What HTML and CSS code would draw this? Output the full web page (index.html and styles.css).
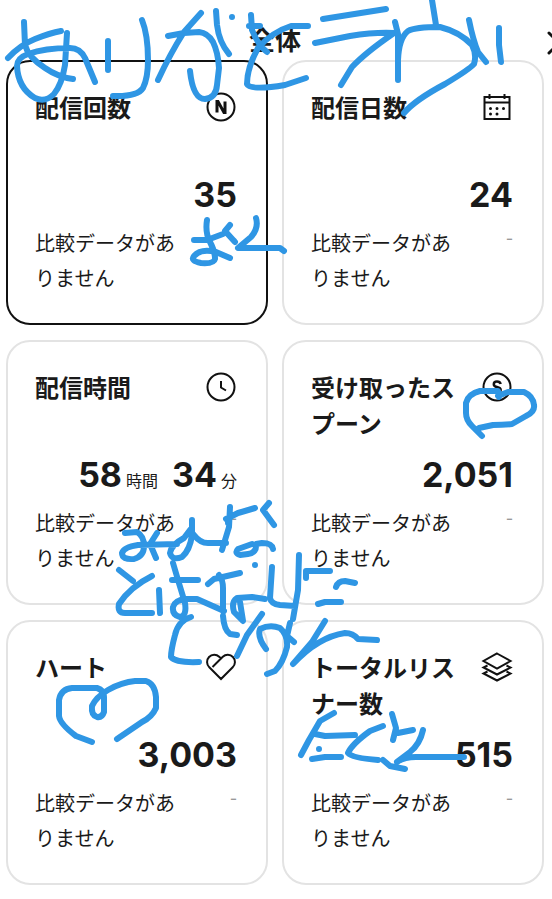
FILE: index.html
```html
<!DOCTYPE html>
<html lang="ja">
<head>
  <meta charset="UTF-8" />
  <meta name="viewport" content="width=device-width, initial-scale=1.0" />
  <title>全体</title>
  <link rel="stylesheet" href="styles.css">
</head>
<body>
<div class="page">
  <header class="topbar">
    <h1>全体</h1>
    <button type="button" class="close" aria-label="閉じる">
      <svg viewBox="0 0 24 24"><path d="M2 2 22 22M22 2 2 22"/></svg>
    </button>
  </header>

  <main class="grid">
    <section class="card active">
      <div class="head">
        <h2>配信回数</h2>
        <svg class="icon" viewBox="0 0 32 32"><circle cx="16" cy="16" r="13.5"/><path class="bold" d="M12 21.500V10.500H13L19 21.500H20V10.500"/></svg>
      </div>
      <p class="value">35</p>
      <div class="note"><p>比較データがありません</p><span>-</span></div>
    </section>

    <section class="card">
      <div class="head">
        <h2>配信日数</h2>
        <svg class="icon" viewBox="0 0 32 32"><path d="M3.5 6H28.500V28H3.500ZM3.500 11.500H28.500M8.500 3V8M23.500 3V8"/><path class="dots" d="M9.500 17.500h0M16 17.500h0M22.500 17.500h0M9.500 23h0M16 23h0"/></svg>
      </div>
      <p class="value">24</p>
      <div class="note"><p>比較データがありません</p><span>-</span></div>
    </section>

    <section class="card">
      <div class="head">
        <h2>配信時間</h2>
        <svg class="icon" viewBox="0 0 32 32"><circle cx="16" cy="16" r="13.5"/><path d="M16 10V16.500L21 19.500"/></svg>
      </div>
      <p class="value">58<small>時間</small><b>34</b><small>分</small></p>
      <div class="note"><p>比較データがありません</p><span>-</span></div>
    </section>

    <section class="card">
      <div class="head">
        <h2>受け取ったスプーン</h2>
        <svg class="icon" viewBox="0 0 32 32"><circle cx="16" cy="16" r="13.5"/><path class="mid" d="M19.700 13Q19 10.500 16 10.500Q12.800 10.500 12.800 13.200Q12.800 15.300 16 16Q19.700 16.800 19.700 19Q19.500 21.800 16 21.800Q12.800 21.800 12.300 19"/></svg>
      </div>
      <p class="value">2,051</p>
      <div class="note"><p>比較データがありません</p><span>-</span></div>
    </section>

    <section class="card">
      <div class="head">
        <h2>ハート</h2>
        <svg class="icon" viewBox="0 0 32 32"><path d="M16 28 4.300 16.200A7 7 0 0 1 14.200 5.800L16 7.500 17.800 5.800A7 7 0 0 1 27.700 16.200ZM16 7.500 7.500 16"/></svg>
      </div>
      <p class="value">3,003</p>
      <div class="note"><p>比較データがありません</p><span>-</span></div>
    </section>

    <section class="card">
      <div class="head">
        <h2>トータルリスナー数</h2>
        <svg class="icon" viewBox="0 0 32 32"><path d="M16 2.500 29.500 10 16 17.500 2.500 10ZM6.500 14.500 2.500 16.500 16 23.500 29.500 16.500 25.500 14.500M6.500 20.500 2.500 22.500 16 29.500 29.500 22.500 25.500 20.500"/></svg>
      </div>
      <p class="value">515</p>
      <div class="note"><p>比較データがありません</p><span>-</span></div>
    </section>
  </main>

  <!-- handwriting layer -->
  <svg class="ink" viewBox="0 0 552 899" aria-hidden="true">
    <!-- top line -->
    <path d="M8 58Q20 45 35 39T61 31M24 22 25 45Q28 57 45 68 58 77 73 79M67 33 65 65Q62 84 54 94 45 103 35 98 18 88 17 66 17 58 28 54 45 48 70 48 80 48 85 58L95 82"/>
    <path d="M108 41V70M142 20Q148 35 148 60 148 78 143 88 137 97 113 96"/>
    <path d="M201 13 184 32Q170 54 158 80M168 36 184 33 199 32Q208 33 213 42 218 52 219 68L217 85Q216 98 205 99 193 99 190 71M216 11 217 25Q219 42 229 54M232 17h0"/>
    <path d="M251 15 252 30Q258 45 267 52M249 26H260M308 26H291Q272 32 258 48 247 68 247 84 250 91 285 85L306 78"/>
    <path d="M323 19 386 9M315 43 350 36Q375 32 394 33 365 53 352 67L341 85"/>
    <path d="M395 22 398 34V80M398 60Q399 38 408 31 415 27 440 27 460 32 472 45 477 55 474 64 470 69 445 84 415 100 404 113M432 0 436 25"/>
    <path d="M469 20Q473 40 478 52L486 62M499 28V45L501 62"/>
    <!-- first card -->
    <path d="M207 220Q205 233 210 242 215 251 215 259 214 264 201 263 190 261 194 256 201 248 216 252L230 258M194 240H207L223 234M230 225 225 231 235 242M256 218Q259 228 251 237L238 248H280L284 251"/>
    <!-- spoon card -->
    <path d="M499 397 498 391H480Q468 394 466 403V413Q466 420 472 426L482 436M498 396 508 392H524Q533 396 534 405 535 412 526 416L512 424Q503 425 493 425L479 428"/>
    <!-- middle lines -->
    <path d="M125 533 137 532Q144 536 144 546 144 556 134 559 122 560 122 553 124 547 138 545L177 544M157 533 150 544 156 558M192 520V535Q190 550 182 557 172 561 170 553 171 545 184 538L190 530 194 535Q200 543 208 543H226M230 507 229 527 222 550M226 519 238 513 255 508M228 519V523M269 503 263 510 274 525M273 549Q272 543 262 543L256 544Q257 553 248 554L240 555Q234 553 238 549L252 544M255 565h0"/>
    <path d="M119 570 133 581M152 576Q130 587 119 604 117 613 125 613H152M159 590 160 613M173 563 178 580 185 603Q187 616 180 617 172 615 173 607 175 600 186 599L197 599 224 611M172 580H198M208 584 214 579 240 573M219 575Q223 580 223 588V611M223 616Q224 630 230 634L237 635M265 599 252 597 237 598Q231 602 234 612L243 621 240 602"/>
    <path d="M272 567 270 598Q271 604 280 605L295 606M299 555 298 590 293 619M306 578V571H330M336 587Q338 581 345 581L355 583M318 604 325 602H341"/>
    <path d="M191 617Q178 621 175 635 171 650 171 657 176 663 199 662M262 614 247 635 237 656M266 649Q257 637 260 629 270 624 280 628 288 635 287 647 283 663 275 671L267 674M290 623 287 636 294 642M325 621 312 642 293 664Q318 637 345 633 353 633 358 639L377 640"/>
    <!-- heart card -->
    <path d="M92 742 76 736Q60 724 59 716V700Q61 689 72 688H97Q104 690 104 697V712Q102 718 97 717 91 715 92 706 96 697 108 690 122 682 135 681H146Q155 684 156 697V708Q152 717 142 722L117 739"/>
    <!-- listener card -->
    <path d="M334 713 320 721 309 740 301 755M315 734 325 736 355 735M319 749h0M312 759 325 757H341M383 726 370 731Q352 744 348 753 352 758 378 760M392 714 396 728 393 740M398 733 413 730M423 730Q420 744 410 752L397 762Q404 757 416 757H464M383 760 390 766 405 769"/>
  </svg>
</div>
</body>
</html>
```

FILE: styles.css
```css
:root{--ink:#2f96e4;--text:#1a1a1a;--line:#e3e3e3}
*{box-sizing:border-box}
body{margin:0;background:#fff;color:var(--text);font-family:"Noto Sans CJK JP",sans-serif}
h1,h2,p{margin:0}
.page{position:relative;overflow:hidden;padding:0 8px 14px 6px}

.topbar{display:flex;align-items:center;justify-content:center;height:60px;padding-top:18px}
h1{font-size:26px;line-height:40px;font-weight:700}
.close{position:absolute;top:31px;right:-19px;width:24px;height:24px;padding:0;border:none;background:none}
.close svg{display:block;fill:none;stroke:#111;stroke-width:3;stroke-linecap:round}

.grid{display:grid;grid-template-columns:1fr 1fr;gap:15px 14px}
.card{padding:27px 29px 28px 27px;border:2px solid var(--line);border-radius:24px;background:#fff}
.card.active{border-color:#111}
.head{display:flex;justify-content:space-between;align-items:flex-start;gap:8px;min-height:76px}
h2{flex:1;font-size:24px;line-height:36px;font-weight:700}
.icon{flex:none;width:32px;height:32px;margin-top:2px;fill:none;stroke:#111;stroke-width:2}
.icon .bold{stroke-width:3}
.icon .mid{stroke-width:2.5}
.icon .dots{stroke-width:3;stroke-linecap:round}
.value{display:flex;justify-content:flex-end;align-items:baseline;font-family:Inter,"Noto Sans CJK JP",sans-serif;font-size:34px;line-height:60px;font-weight:700}
.value b{margin-left:14px;font-weight:700}
.value small{margin-left:4px;font-family:"Noto Sans CJK JP",sans-serif;font-size:16px;line-height:24px;font-weight:400}
.note{display:flex;justify-content:space-between;gap:40px;font-size:20px;line-height:35px;font-weight:400}
.note span{line-height:24px;color:#999}

.ink{position:absolute;top:0;left:0;width:100%;fill:none;stroke:var(--ink);stroke-width:6;stroke-linecap:round;stroke-linejoin:round;pointer-events:none}
```
